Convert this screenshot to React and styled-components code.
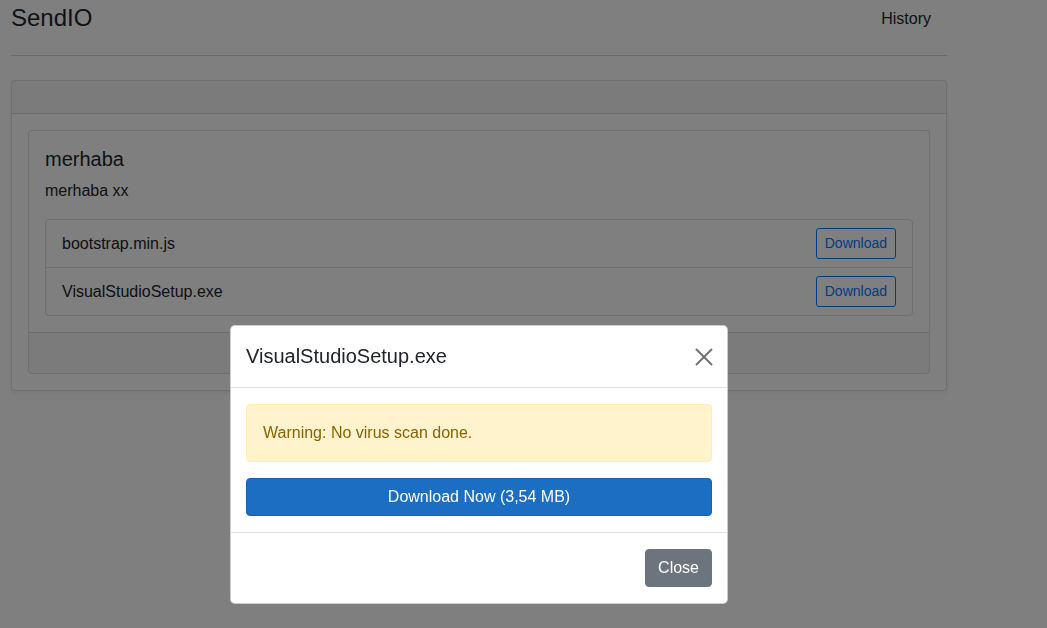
import React from "react";
import styled, { createGlobalStyle } from "styled-components";

const Global = createGlobalStyle`
  html, body { margin: 0; padding: 0; background: #fff; }
  body {
    font-family: "Liberation Sans", Arial, sans-serif;
    font-size: 16px;
    line-height: 1.5;
    color: #212529;
  }
  * { box-sizing: border-box; }
`;

const Page = styled.div`
  width: 936px;
  margin-left: 11px;
  min-height: 628px;
`;

const TopRow = styled.header`
  height: 56px;
  display: flex;
  align-items: flex-start;
  justify-content: space-between;
  border-bottom: 1px solid #d6d5d5;
  padding: 0 16px 0 0;
`;

const Brand = styled.div`
  font-size: 24px;
  line-height: 36px;
`;

const NavLink = styled.a`
  font-size: 16px;
  line-height: 24px;
  margin-top: 7px;
  color: #212529;
  text-decoration: none;
`;

const Card = styled.div`
  border: 1px solid rgba(0, 0, 0, 0.125);
  border-radius: 4px;
  background: #fff;
  display: flex;
  flex-direction: column;
  margin-top: ${(p) => p.$mt || 0}px;
  box-shadow: ${(p) => (p.$shadow ? "0 2px 4px rgba(0,0,0,0.075)" : "none")};
`;

const CardHeader = styled.div`
  height: 33px;
  background: rgba(0, 0, 0, 0.03);
  border-bottom: 1px solid rgba(0, 0, 0, 0.125);
`;

const CardFooter = styled.div`
  height: 41px;
  background: rgba(0, 0, 0, 0.03);
  border-top: 1px solid rgba(0, 0, 0, 0.125);
`;

const CardBody = styled.div`
  padding: 16px;
`;

const CardTitle = styled.h5`
  margin: 0 0 8px;
  font-size: 20px;
  font-weight: 400;
  line-height: 24px;
`;

const CardText = styled.p`
  margin: 0 0 16px;
  line-height: 24px;
`;

const ListGroup = styled.ul`
  list-style: none;
  margin: 0;
  padding: 0;
  border: 1px solid rgba(0, 0, 0, 0.125);
  border-radius: 4px;
`;

const ListItem = styled.li`
  display: flex;
  align-items: center;
  justify-content: space-between;
  padding: 8px 16px;
  line-height: 24px;
  & + & {
    border-top: 1px solid rgba(0, 0, 0, 0.125);
  }
`;

const OutlineBtn = styled.button`
  font-family: inherit;
  font-size: 14px;
  line-height: 21px;
  padding: 4px 8px;
  color: #007bff;
  background: transparent;
  border: 1px solid #007bff;
  border-radius: 3px;
`;

const Backdrop = styled.div`
  position: fixed;
  inset: 0;
  background: rgba(0, 0, 0, 0.5);
`;

const Modal = styled.div`
  position: fixed;
  left: 230px;
  top: 325px;
  width: 498px;
  background: #fff;
  border: 1px solid rgba(0, 0, 0, 0.2);
  border-radius: 5px;
  display: flex;
  flex-direction: column;
`;

const ModalHeader = styled.div`
  display: flex;
  align-items: center;
  justify-content: space-between;
  padding: 16px 14px 16px 15px;
  border-bottom: 1px solid #dee2e6;
`;

const ModalTitle = styled.h5`
  margin: 0;
  font-size: 20px;
  font-weight: 400;
  line-height: 29px;
`;

const CloseX = styled.button`
  width: 18px;
  height: 18px;
  padding: 0;
  border: 0;
  background: transparent;
  display: flex;
  opacity: 0.55;
`;

const ModalBody = styled.div`
  padding: 16px 15px;
  display: flex;
  flex-direction: column;
`;

const Alert = styled.div`
  background: #fff3cd;
  border: 1px solid #ffeeba;
  color: #856404;
  border-radius: 4px;
  padding: 16px 16px;
  line-height: 24px;
  margin-bottom: 16px;
`;

const PrimaryBtn = styled.button`
  width: 100%;
  font-family: inherit;
  font-size: 16px;
  line-height: 24px;
  padding: 6px 12px;
  color: #fff;
  background: #1b6ec2;
  border: 1px solid #1861ac;
  border-radius: 4px;
`;

const ModalFooter = styled.div`
  display: flex;
  justify-content: flex-end;
  padding: 16px 15px;
  border-top: 1px solid #dee2e6;
`;

const SecondaryBtn = styled.button`
  font-family: inherit;
  font-size: 16px;
  line-height: 24px;
  padding: 6px 12px;
  color: #fff;
  background: #6c757d;
  border: 1px solid #6c757d;
  border-radius: 4px;
`;

const files = ["bootstrap.min.js", "VisualStudioSetup.exe"];

export default function App() {
  return (
    <>
      <Global />
      <Page>
        <TopRow>
          <Brand>SendIO</Brand>
          <NavLink href="#">History</NavLink>
        </TopRow>
        <Card $mt={24} $shadow>
          <CardHeader />
          <CardBody>
            <Card>
              <CardBody>
                <CardTitle>merhaba</CardTitle>
                <CardText>merhaba xx</CardText>
                <ListGroup>
                  {files.map((f) => (
                    <ListItem key={f}>
                      <span>{f}</span>
                      <OutlineBtn>Download</OutlineBtn>
                    </ListItem>
                  ))}
                </ListGroup>
              </CardBody>
              <CardFooter />
            </Card>
          </CardBody>
        </Card>
      </Page>
      <Backdrop />
      <Modal>
        <ModalHeader>
          <ModalTitle>VisualStudioSetup.exe</ModalTitle>
          <CloseX aria-label="Close">
            <svg width="18" height="18" viewBox="0 0 18 18">
              <path d="M1 1L17 17M17 1L1 17" stroke="#000" strokeWidth="2" fill="none" />
            </svg>
          </CloseX>
        </ModalHeader>
        <ModalBody>
          <Alert>Warning: No virus scan done.</Alert>
          <PrimaryBtn>Download Now (3,54 MB)</PrimaryBtn>
        </ModalBody>
        <ModalFooter>
          <SecondaryBtn>Close</SecondaryBtn>
        </ModalFooter>
      </Modal>
    </>
  );
}
